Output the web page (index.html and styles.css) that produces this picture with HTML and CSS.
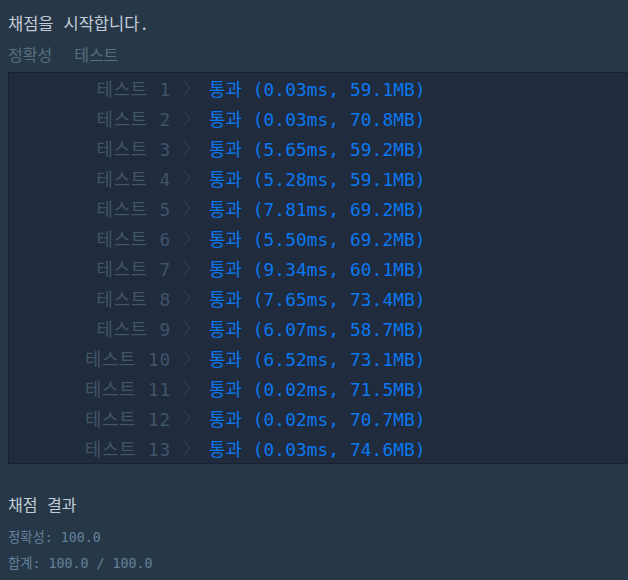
FILE: index.html
```html
<!DOCTYPE html>
<html lang="ko">
<head>
<meta charset="utf-8">
<link rel="stylesheet" href="styles.css">
</head>
<body>
<div class="console">
  <p class="msg">채점을 시작합니다.</p>
  <div class="tabs"><span class="tab">정확성</span><span class="tab">테스트</span></div>
  <div class="group">
    <div class="row"><span class="label">테스트 1</span><svg class="chev" width="7" height="16" viewBox="0 0 7 16"><polyline points="0.5,0.5 6.5,8 0.5,15.5"/></svg><span class="res">통과 (0.03ms, 59.1MB)</span></div>
    <div class="row"><span class="label">테스트 2</span><svg class="chev" width="7" height="16" viewBox="0 0 7 16"><polyline points="0.5,0.5 6.5,8 0.5,15.5"/></svg><span class="res">통과 (0.03ms, 70.8MB)</span></div>
    <div class="row"><span class="label">테스트 3</span><svg class="chev" width="7" height="16" viewBox="0 0 7 16"><polyline points="0.5,0.5 6.5,8 0.5,15.5"/></svg><span class="res">통과 (5.65ms, 59.2MB)</span></div>
    <div class="row"><span class="label">테스트 4</span><svg class="chev" width="7" height="16" viewBox="0 0 7 16"><polyline points="0.5,0.5 6.5,8 0.5,15.5"/></svg><span class="res">통과 (5.28ms, 59.1MB)</span></div>
    <div class="row"><span class="label">테스트 5</span><svg class="chev" width="7" height="16" viewBox="0 0 7 16"><polyline points="0.5,0.5 6.5,8 0.5,15.5"/></svg><span class="res">통과 (7.81ms, 69.2MB)</span></div>
    <div class="row"><span class="label">테스트 6</span><svg class="chev" width="7" height="16" viewBox="0 0 7 16"><polyline points="0.5,0.5 6.5,8 0.5,15.5"/></svg><span class="res">통과 (5.50ms, 69.2MB)</span></div>
    <div class="row"><span class="label">테스트 7</span><svg class="chev" width="7" height="16" viewBox="0 0 7 16"><polyline points="0.5,0.5 6.5,8 0.5,15.5"/></svg><span class="res">통과 (9.34ms, 60.1MB)</span></div>
    <div class="row"><span class="label">테스트 8</span><svg class="chev" width="7" height="16" viewBox="0 0 7 16"><polyline points="0.5,0.5 6.5,8 0.5,15.5"/></svg><span class="res">통과 (7.65ms, 73.4MB)</span></div>
    <div class="row"><span class="label">테스트 9</span><svg class="chev" width="7" height="16" viewBox="0 0 7 16"><polyline points="0.5,0.5 6.5,8 0.5,15.5"/></svg><span class="res">통과 (6.07ms, 58.7MB)</span></div>
    <div class="row"><span class="label">테스트 10</span><svg class="chev" width="7" height="16" viewBox="0 0 7 16"><polyline points="0.5,0.5 6.5,8 0.5,15.5"/></svg><span class="res">통과 (6.52ms, 73.1MB)</span></div>
    <div class="row"><span class="label">테스트 11</span><svg class="chev" width="7" height="16" viewBox="0 0 7 16"><polyline points="0.5,0.5 6.5,8 0.5,15.5"/></svg><span class="res">통과 (0.02ms, 71.5MB)</span></div>
    <div class="row"><span class="label">테스트 12</span><svg class="chev" width="7" height="16" viewBox="0 0 7 16"><polyline points="0.5,0.5 6.5,8 0.5,15.5"/></svg><span class="res">통과 (0.02ms, 70.7MB)</span></div>
    <div class="row"><span class="label">테스트 13</span><svg class="chev" width="7" height="16" viewBox="0 0 7 16"><polyline points="0.5,0.5 6.5,8 0.5,15.5"/></svg><span class="res">통과 (0.03ms, 74.6MB)</span></div>
  </div>
  <p class="heading">채점 결과</p>
  <p class="score">정확성: 100.0</p>
  <p class="score">합계: 100.0 / 100.0</p>
</div>
</body>
</html>
```

FILE: styles.css
```css
html, body {
  margin: 0;
  padding: 0;
  background: #263747;
  overflow: hidden;
}
.console {
  padding: 12px 0 0 8px;
  font-family: "DejaVu Sans Mono", "Noto Sans CJK KR", monospace;
  width: 640px;
}
.msg {
  margin: 0;
  font-size: 16.5px;
  line-height: 26px;
  color: #c3ccd6;
}
.tabs {
  margin-top: 6px;
  display: flex;
  gap: 22px;
  font-size: 16px;
  line-height: 24px;
  color: #56707f;
}
.group {
  margin-top: 4px;
  background: #202b3d;
  border: 1px solid #172130;
  border-right: none;
  font-size: 17.8px;
}
.row {
  display: flex;
  align-items: center;
  height: 30px;
  padding-bottom: 1px;
  box-sizing: border-box;
}
.label {
  width: 162px;
  text-align: right;
  color: #415468;
  white-space: pre;
  letter-spacing: 0.8px;
}
.chev {
  margin-left: 12px;
  margin-right: 19px;
  fill: none;
  stroke: #34455a;
  stroke-width: 1;
}
.res {
  color: #0c78f0;
  white-space: pre;
  letter-spacing: 0.1px;
}
.heading {
  margin: 29px 0 0;
  font-size: 16px;
  line-height: 26px;
  color: #c3ccd6;
}
.score {
  margin: 0;
  font-size: 13.3px;
  line-height: 26px;
  color: #62809a;
}
.heading + .score {
  margin-top: 6px;
}
```
